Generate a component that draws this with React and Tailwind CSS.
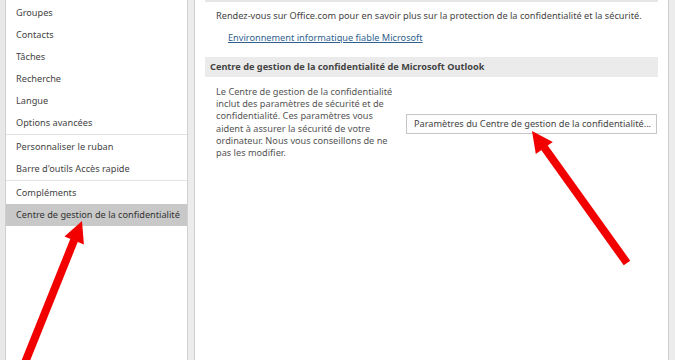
export default function App() {
  const items1 = ["Groupes", "Contacts", "Tâches", "Recherche", "Langue", "Options avancées"];
  const items2 = ["Personnaliser le ruban", "Barre d'outils Accès rapide"];
  const row = "h-[22px] flex items-center pl-[10px] whitespace-nowrap";
  return (
    <div className="relative w-[675px] h-[360px] overflow-hidden bg-white flex font-['Noto_Sans',sans-serif] text-[9.2px] text-[#444]">
      <div className="w-[6px] h-full bg-[#e8e8e8] border-r border-[#cfcfcf]" />
      <div className="w-[181px] h-full flex flex-col pt-[2px]">
        {items1.map((t) => (
          <div key={t} className={row}>{t}</div>
        ))}
        <div className="h-[2px] flex flex-col"><div className="h-px bg-[#e2e2e2]" /></div>
        {items2.map((t) => (
          <div key={t} className={row}>{t}</div>
        ))}
        <div className="h-[2px] flex flex-col"><div className="h-px bg-[#e2e2e2]" /></div>
        <div className={row}>Compléments</div>
        <div className={row + " bg-[#c8c8c8] text-[#333]"}>Centre de gestion de la confidentialité</div>
      </div>
      <div className="w-[8px] h-full bg-[#ececec] border-l border-r border-[#d0d0d0]" />
      <div className="flex-1 h-full flex flex-col px-[10px]">
        <div className="h-[2px] bg-[#e6e6e6]" />
        <div className="mt-[8px] pl-[11px] leading-[12px] whitespace-nowrap">
          Rendez-vous sur Office.com pour en savoir plus sur la protection de la confidentialité et la sécurité.
        </div>
        <div className="mt-[10px] pl-[23px] leading-[12px] whitespace-nowrap text-[#2f5f8f] underline">
          Environnement informatique fiable Microsoft
        </div>
        <div className="mt-[13px] h-[20px] bg-[#ebebeb] flex items-center pl-[5px] font-bold whitespace-nowrap">
          Centre de gestion de la confidentialité de Microsoft Outlook
        </div>
        <div className="flex mt-[9px]">
          <div className="pl-[11px] w-[201px] leading-[12.2px] text-[#555] whitespace-nowrap">
            Le Centre de gestion de la confidentialité<br />
            inclut des paramètres de sécurité et de<br />
            confidentialité. Ces paramètres vous<br />
            aident à assurer la sécurité de votre<br />
            ordinateur. Nous vous conseillons de ne<br />
            pas les modifier.
          </div>
          <div className="mt-[28px] h-[20px] w-[251px] border border-[#c6c6c6] bg-[#fdfdfd] flex items-center pl-[7px] whitespace-nowrap">
            Paramètres du Centre de gestion de la confidentialité...
          </div>
        </div>
      </div>
      <div className="w-[7px] h-full bg-[#ececec] border-l border-[#cfcfcf]" />
      <svg className="absolute inset-0 pointer-events-none" width="675" height="360" viewBox="0 0 675 360">
        <line x1="74.2" y1="240" x2="22" y2="370" stroke="#f20000" strokeWidth="8" />
        <polygon points="82,221 83.9,244.4 64.5,236.6" fill="#f20000" />
        <line x1="544.3" y1="147.5" x2="627" y2="263" stroke="#f20000" strokeWidth="8" />
        <polygon points="532,131 552.8,141.9 535.8,154.1" fill="#f20000" />
      </svg>
    </div>
  );
}
